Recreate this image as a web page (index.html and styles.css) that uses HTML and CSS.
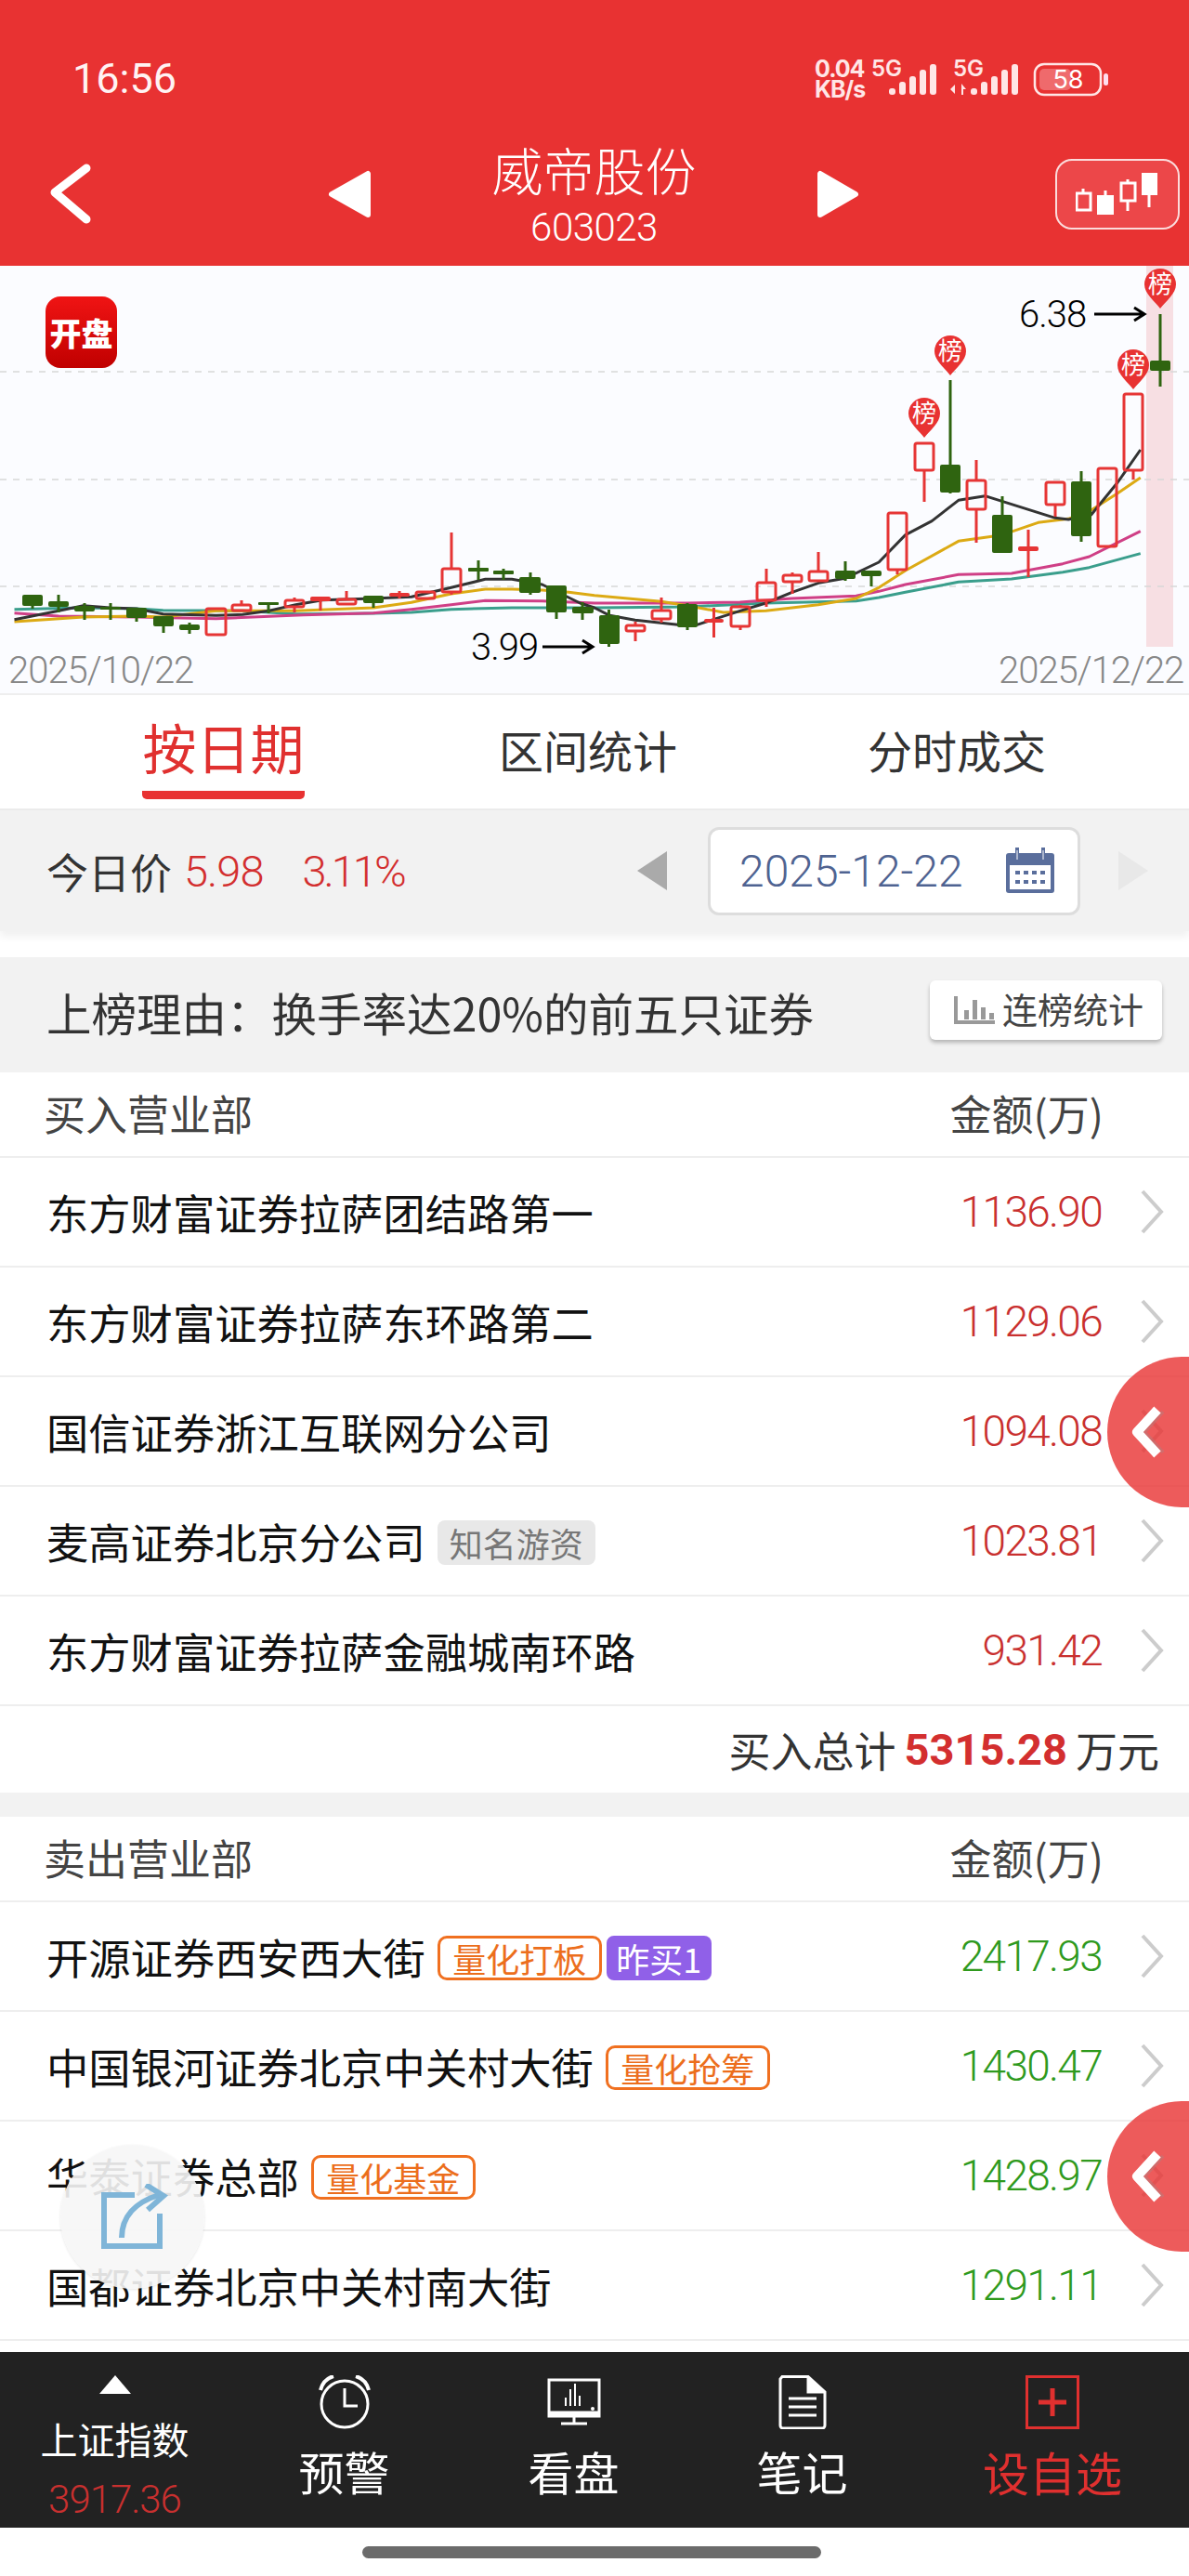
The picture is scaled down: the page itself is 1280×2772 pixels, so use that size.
FILE: index.html
```html
<!DOCTYPE html>
<html lang="zh-CN">
<head>
<meta charset="utf-8">
<title>威帝股份</title>
<link rel="stylesheet" href="styles.css">
</head>
<body>
<div class="page">
  <header class="top">
    <div class="status">
      <span class="clock">16:56</span>
      <div class="status-right">
        <div class="speed"><span>0.04</span><span>KB/s</span></div>
        <svg class="sig" width="320" height="50" viewBox="936 60 320 50">
          <text class="sig-t" x="938" y="82">5G</text>
          <g class="sig-b">
            <rect x="957" y="95" width="7" height="7" rx="3"/><rect x="968" y="88" width="7" height="14" rx="3"/><rect x="979" y="82" width="7" height="20" rx="3"/><rect x="990" y="75" width="7" height="27" rx="3"/><rect x="1001" y="69" width="7" height="33" rx="3"/>
            <path d="M1023 96l5-5v10zM1035 90l5 6h-3v6h-2z"/>
            <rect x="1045" y="95" width="7" height="7" rx="3"/><rect x="1056" y="88" width="7" height="14" rx="3"/><rect x="1067" y="82" width="7" height="20" rx="3"/><rect x="1078" y="75" width="7" height="27" rx="3"/><rect x="1089" y="69" width="7" height="33" rx="3"/>
          </g>
          <text class="sig-t" x="1026" y="82">5G</text>
          <rect class="bat" x="1114" y="69" width="71" height="33" rx="10"/>
          <rect class="bat-f" x="1119" y="74" width="34" height="23" rx="5"/>
          <text class="bat-t" x="1150" y="95">58</text>
          <rect x="1188" y="79" width="5" height="13" rx="2.5" fill="#fde"/>
        </svg>
      </div>
    </div>
    <nav class="nav">
      <svg class="back" width="50" height="70" viewBox="0 0 50 70"><path d="M41 7L7 33l34 29"/></svg>
      <svg width="47" height="52" viewBox="0 0 47 52"><path class="tri" d="M43 4v44L4 26z"/></svg>
      <div class="title"><div class="title-n">威帝股份</div><div class="title-c">603023</div></div>
      <svg width="46" height="52" viewBox="0 0 46 52"><path class="tri" d="M4 4v44l38-22z"/></svg>
      <div class="kline-btn">
        <svg width="90" height="48" viewBox="1159 184 90 48">
          <path class="kl-s" d="M1167 203v5M1191 205v5M1215 193v4M1215 216v11M1238 210v13"/>
          <rect class="kl-h" x="1160" y="208" width="15" height="18"/>
          <rect class="kl-f" x="1182" y="210" width="18" height="21"/>
          <rect class="kl-h" x="1208" y="197" width="15" height="19"/>
          <rect class="kl-f" x="1230" y="186" width="17" height="24"/>
        </svg>
      </div>
    </nav>
  </header>

  <section class="chart">
    <svg class="chart-svg" width="1280" height="460" viewBox="0 287 1280 460">
      <rect class="band" x="1234" y="287" width="29" height="410"/>
      <path class="grid" d="M0 401H1280M0 517H1280M0 632H1280"/>
      <g transform="translate(0 280) scale(.40816 .33333)">
        <polyline class="ma teal" points="38,1130 220,1125 360,1128 430,1133 640,1135 780,1145 985,1143 1085,1140 1190,1130 1350,1125 1568,1125 1813,1122 2020,1110 2258,1103 2318,1092 2388,1075 2528,1042 2668,1032 2803,1010 2873,995 3008,950"/>
        <polyline class="ma pink" points="38,1142 155,1152 360,1155 570,1160 800,1148 985,1142 1085,1130 1190,1115 1280,1102 1430,1103 1568,1110 1813,1110 1952,1107 2088,1095 2258,1087 2318,1072 2388,1050 2528,1018 2668,1014 2803,983 2873,960 3008,878"/>
        <polyline class="ma gold" points="38,1170 220,1155 360,1152 430,1155 570,1135 700,1135 780,1135 985,1125 1085,1108 1190,1080 1280,1065 1350,1065 1430,1068 1500,1075 1568,1085 1744,1105 1813,1118 1908,1140 2020,1135 2158,1115 2258,1095 2318,1060 2388,1005 2528,910 2643,890 2738,850 2818,838 2878,810 2948,755 3008,705"/>
        <polyline class="ma black" points="38,1163 155,1135 220,1118 290,1125 360,1128 430,1145 570,1150 640,1147 710,1135 780,1115 850,1100 985,1095 1085,1090 1190,1060 1280,1033 1350,1033 1430,1050 1530,1110 1568,1125 1608,1150 1675,1165 1788,1180 1838,1180 1952,1135 2020,1110 2089,1075 2159,1045 2229,1030 2318,978 2388,890 2458,845 2528,778 2598,764 2783,835 2818,840 2878,825 2948,720 3008,615"/>
      </g>
      <path class="w-g" d="M35 653V656M63 641V660M91 650V668M119 650V668M147 666V670M176 675V682M204 671V683M289 652V661M402 650V655M515 604V625M542 613V625M571 617V641M599 660V667M627 649V668M655.5 657V697M740 650V679M910 605V626M938 621V632M1023 410V532M1079 535V555M1164 508V584M1249 339V417"/>
      <g class="c-g">
        <rect x="24" y="641" width="22" height="12" rx="2"/><rect x="52" y="648" width="22" height="6" rx="2"/><rect x="80" y="653" width="22" height="6" rx="2"/><rect x="108" y="654" width="22" height="3" rx="1"/><rect x="136" y="655" width="22" height="11" rx="2"/><rect x="165" y="664" width="22" height="11" rx="2"/><rect x="193" y="673" width="22" height="6" rx="2"/><rect x="278" y="649" width="22" height="3" rx="1"/><rect x="391" y="642" width="22" height="8" rx="2"/><rect x="504" y="612" width="22" height="4" rx="1"/><rect x="531" y="615" width="22" height="4" rx="1"/><rect x="559" y="622" width="23" height="17" rx="2"/><rect x="588" y="631" width="22" height="29" rx="2"/><rect x="616" y="654" width="23" height="7" rx="2"/><rect x="645" y="663" width="22" height="31" rx="2"/><rect x="729" y="651" width="22" height="25" rx="2"/><rect x="899" y="615" width="22" height="9" rx="2"/><rect x="927" y="615" width="22" height="6" rx="2"/><rect x="1012" y="501" width="22" height="30" rx="2"/><rect x="1068" y="555" width="22" height="41" rx="2"/><rect x="1153" y="519" width="22" height="59" rx="2"/><rect x="1238" y="389" width="22" height="11" rx="2"/>
      </g>
      <path class="w-r" d="M260 647V652M317 644V647M317 654V660M345 648V658M373 637V646M430 637V645M486 574V613M486 638V641M684 670V674M684 680V691M712 644V658M712 667V671M768.5 655V687M797 652V654M797 675V679M825 613V628M825 647V654M853 617V620M853 627V640M881 595V616M966 614V619M995 507V541M1051 496V518M1051 549V585M1107 571V622M1136 544V557M1220 507V517"/>
      <g class="c-r">
        <rect x="222" y="656" width="21" height="28" rx="2"/><rect x="250" y="652" width="20" height="6" rx="2"/><rect x="307" y="647" width="20" height="7" rx="2"/><rect x="363" y="646" width="20" height="5" rx="2"/><rect x="448" y="638" width="20" height="7" rx="2"/><rect x="476" y="613" width="20" height="25" rx="2"/><rect x="674" y="674" width="20" height="6" rx="2"/><rect x="702" y="658" width="20" height="9" rx="2"/><rect x="787" y="654" width="20" height="21" rx="2"/><rect x="815" y="628" width="20" height="19" rx="2"/><rect x="843" y="620" width="20" height="7" rx="2"/><rect x="871" y="616" width="20" height="10" rx="2"/><rect x="956" y="553" width="20" height="61" rx="2"/><rect x="985" y="478" width="20" height="29" rx="2"/><rect x="1041" y="518" width="20" height="31" rx="2"/><rect x="1126" y="520" width="20" height="24" rx="2"/><rect x="1182" y="505" width="20" height="84" rx="2"/><rect x="1210" y="425" width="20" height="82" rx="2"/>
      </g>
      <g class="c-rf">
        <rect x="334" y="643" width="22" height="5" rx="2"/><rect x="419" y="639" width="22" height="4" rx="2"/><rect x="758" y="667" width="21" height="4" rx="2"/><rect x="1096" y="589" width="22" height="5" rx="2"/>
      </g>
      <g class="pin" transform="translate(995 446)"><path d="M-17 0a17 17 0 1 1 34 0c0 10-11 18-17 26c-6-8-17-16-17-26z"/><text y="9">榜</text></g>
      <g class="pin" transform="translate(1023 379)"><path d="M-17 0a17 17 0 1 1 34 0c0 10-11 18-17 26c-6-8-17-16-17-26z"/><text y="9">榜</text></g>
      <g class="pin" transform="translate(1220 394)"><path d="M-17 0a17 17 0 1 1 34 0c0 10-11 18-17 26c-6-8-17-16-17-26z"/><text y="9">榜</text></g>
      <g class="pin" transform="translate(1249 307)"><path d="M-17 0a17 17 0 1 1 34 0c0 10-11 18-17 26c-6-8-17-16-17-26z"/><text y="9">榜</text></g>
      <text class="mark" x="507" y="711">3.99</text>
      <path class="arrow" d="M584 697H637M627 690l11 7-11 7"/>
      <text class="mark" x="1097" y="353">6.38</text>
      <path class="arrow" d="M1178 339H1231M1221 332l11 7-11 7"/>
      <text class="axis" x="9" y="736">2025/10/22</text>
      <text class="axis" x="1075" y="736">2025/12/22</text>
    </svg>
    <div class="open-badge">开盘</div>
  </section>

  <div class="tabs">
    <div class="tab tab-on">按日期</div>
    <div class="tab tab-2">区间统计</div>
    <div class="tab tab-3">分时成交</div>
  </div>

  <div class="price-bar">
    <span class="pb-l">今日价</span><span class="pb-v">5.98</span><span class="pb-p">3.11%</span>
    <svg class="pb-prev" width="34" height="44" viewBox="0 0 34 44"><path d="M33 1v42L1 22z"/></svg>
    <div class="date-box">
      <span class="date-t">2025-12-22</span>
      <svg width="54" height="50" viewBox="0 0 54 50">
        <rect x="1" y="6" width="52" height="43" rx="3" fill="#5a6e9c"/>
        <rect x="5" y="19" width="44" height="26" fill="#fff"/>
        <path d="M13 0v12M41 0v12" stroke="#5a6e9c" stroke-width="4" fill="none"/>
        <path d="M13 3v10M41 3v10" stroke="#fff" stroke-width="1" fill="none"/>
        <path d="M11 25h5v4h-5zM20 25h5v4h-5zM29 25h5v4h-5zM38 25h5v4h-5zM11 35h5v4h-5zM20 35h5v4h-5zM29 35h5v4h-5zM38 35h5v4h-5z" fill="#5a6e9c"/>
      </svg>
    </div>
    <svg class="pb-next" width="34" height="44" viewBox="0 0 34 44"><path d="M1 1v42l32-21z"/></svg>
  </div>

  <div class="reason">
    <span class="reason-t">上榜理由：换手率达20%的前五只证券</span>
    <div class="stat-btn">
      <svg width="44" height="30" viewBox="0 0 44 30"><path d="M2 0v28h42" fill="none" stroke="#999" stroke-width="4"/><path d="M11 15h5v10h-5zM20 4h5v21h-5zM29 12h5v13h-5zM38 18h5v7h-5z" fill="#999"/></svg>
      <span class="stat-t">连榜统计</span>
    </div>
  </div>

  <main class="list">
    <div class="head"><span>买入营业部</span><span>金额(万)</span></div>
    <div class="row"><span class="name">东方财富证券拉萨团结路第一</span><span class="amt up">1136.90</span><svg class="chev" width="26" height="48" viewBox="0 0 26 48"><path d="M3 2l20 22L3 46"/></svg></div>
    <div class="row"><span class="name">东方财富证券拉萨东环路第二</span><span class="amt up">1129.06</span><svg class="chev" width="26" height="48" viewBox="0 0 26 48"><path d="M3 2l20 22L3 46"/></svg></div>
    <div class="row"><span class="name">国信证券浙江互联网分公司</span><span class="amt up">1094.08</span><svg class="chev" width="26" height="48" viewBox="0 0 26 48"><path d="M3 2l20 22L3 46"/></svg></div>
    <div class="row"><span class="name">麦高证券北京分公司</span><span class="tag tag-g">知名游资</span><span class="amt up">1023.81</span><svg class="chev" width="26" height="48" viewBox="0 0 26 48"><path d="M3 2l20 22L3 46"/></svg></div>
    <div class="row"><span class="name">东方财富证券拉萨金融城南环路</span><span class="amt up">931.42</span><svg class="chev" width="26" height="48" viewBox="0 0 26 48"><path d="M3 2l20 22L3 46"/></svg></div>
    <div class="total"><span>买入总计</span><b>5315.28</b><span>万元</span></div>
    <div class="gap"></div>
    <div class="head"><span>卖出营业部</span><span>金额(万)</span></div>
    <div class="row"><span class="name">开源证券西安西大街</span><span class="tag tag-o">量化打板</span><span class="tag tag-p">昨买1</span><span class="amt dn">2417.93</span><svg class="chev" width="26" height="48" viewBox="0 0 26 48"><path d="M3 2l20 22L3 46"/></svg></div>
    <div class="row"><span class="name">中国银河证券北京中关村大街</span><span class="tag tag-o">量化抢筹</span><span class="amt dn">1430.47</span><svg class="chev" width="26" height="48" viewBox="0 0 26 48"><path d="M3 2l20 22L3 46"/></svg></div>
    <div class="row"><span class="name">华泰证券总部</span><span class="tag tag-o">量化基金</span><span class="amt dn">1428.97</span><svg class="chev" width="26" height="48" viewBox="0 0 26 48"><path d="M3 2l20 22L3 46"/></svg></div>
    <div class="row"><span class="name">国都证券北京中关村南大街</span><span class="amt dn">1291.11</span><svg class="chev" width="26" height="48" viewBox="0 0 26 48"><path d="M3 2l20 22L3 46"/></svg></div>
  </main>

  <footer class="bar">
    <div class="cell idx">
      <svg width="34" height="20" viewBox="0 0 34 20"><path d="M17 0L34 20H0z" fill="#fff"/></svg>
      <span class="idx-n">上证指数</span>
      <span class="idx-v">3917.36</span>
    </div>
    <div class="cell">
      <svg class="cell-i" width="60" height="58" viewBox="0 0 60 58" fill="none" stroke="#fff"><circle cx="30" cy="31" r="25" stroke-width="3"/><path d="M30 14v19h14" stroke-width="3"/><path d="M4 16C6 8 11 3 18 1M56 16C54 8 49 3 42 1" stroke-width="4"/></svg>
      <span class="cell-t">预警</span>
    </div>
    <div class="cell">
      <svg class="cell-i" width="60" height="58" viewBox="0 0 60 58" fill="none" stroke="#fff"><rect x="3" y="5" width="54" height="39" stroke-width="3"/><path d="M3 41h54" stroke-width="5"/><path d="M30 44v7M16 52h28" stroke-width="3"/><path d="M21 33v-9M26 33V15M31 33V9M36 33V22" stroke-width="2"/><circle cx="50" cy="36" r="2" fill="#fff" stroke="none"/></svg>
      <span class="cell-t">看盘</span>
    </div>
    <div class="cell">
      <svg class="cell-i" width="52" height="58" viewBox="0 0 52 58" fill="none" stroke="#fff" stroke-width="3"><path d="M4 1.500h28L50 18v36a3 3 0 0 1-3 3H5a3 3 0 0 1-3-3V4z"/><path d="M32 2v16h18" fill="#fff"/><path d="M11 25h30M11 34h30M11 43h30"/></svg>
      <span class="cell-t">笔记</span>
    </div>
    <div class="cell">
      <svg class="cell-i" width="58" height="58" viewBox="0 0 58 58" fill="none" stroke="#e0302f"><rect x="1.500" y="1.500" width="55" height="55" stroke-width="3"/><path d="M29 14v30M14 29h30" stroke-width="5"/></svg>
      <span class="cell-t add">设自选</span>
    </div>
  </footer>
  <div class="home"><i></i></div>

  <div class="side side-1"><svg width="44" height="56" viewBox="0 0 44 56"><path class="side-b" d="M38 6L18 28l20 22"/><path class="side-w" d="M32 4L10 28l22 24"/></svg></div>
  <div class="side side-2"><svg width="44" height="56" viewBox="0 0 44 56"><path class="side-b" d="M38 6L18 28l20 22"/><path class="side-w" d="M32 4L10 28l22 24"/></svg></div>
  <div class="share">
    <svg width="74" height="72" viewBox="0 0 74 72" fill="none" stroke="#7fb5d8" stroke-width="6"><path d="M38 12H5v55h60V32"/><path d="M24 58c0-22 14-38 40-46"/><path d="M50 1l19 12-17 15" stroke-width="6"/></svg>
  </div>
</div>
</body>
</html>
```

FILE: styles.css
```css
* { box-sizing: border-box; }
html, body { margin: 0; padding: 0; background: #fff; }
body { font-family: "Noto Sans CJK SC", Roboto, sans-serif; font-weight: 400; color: #333; }
.page { position: relative; width: 1280px; height: 2772px; overflow: hidden; display: flex; flex-direction: column; }

/* header */
.top { background: #e83232; height: 286px; flex: none; color: #fff; }
.status { height: 150px; display: flex; align-items: flex-start; padding: 61px 0 0 78px; }
.clock { font: 400 45px/48px Roboto, sans-serif; color: #fff3f3; }
.status-right { margin-left: auto; margin-top: -1px; display: flex; align-items: flex-start; padding-right: 24px; }
.speed { display: flex; flex-direction: column; font: 700 25px/22px Inter, sans-serif; color: #ffe6e6; letter-spacing: -1px; padding-top: 3px; width: 59px; }
.sig { display: block; }
.sig-t { font: 600 24px Inter, sans-serif; fill: #ffe6e6; }
.sig-b { fill: #ffe6e6; }
.bat { fill: none; stroke: #ffe6e6; stroke-width: 2.500px; }
.bat-f { fill: #ef6a6c; }
.bat-t { font: 400 27px Inter, sans-serif; fill: #fff; text-anchor: middle; }
.nav { display: grid; grid-template-columns: 353px 47px 479px 46px 1fr; align-items: center; height: 136px; }
.back { margin-left: 52px; margin-top: -18px; }
.back path { fill: none; stroke: #fff; stroke-width: 9; stroke-linecap: round; stroke-linejoin: round; }
.tri { fill: #fff; stroke: #fff; stroke-width: 6; stroke-linejoin: round; }
.nav svg:nth-child(2), .nav svg:nth-child(4) { margin-top: -18px; }
.title { text-align: center; margin-top: -19px; }
.title-n { font-size: 55px; line-height: 66px; font-weight: 300; color: #fff; }
.title-c { font: 300 42px/48px Roboto, sans-serif; letter-spacing: -.5px; margin-top: 7px; color: #fff; }
.kline-btn { justify-self: end; margin-right: 10px; margin-top: -18px; width: 134px; height: 76px; background: #ec4749; border: 2px solid #fbdcdc; border-radius: 18px; display: flex; align-items: flex-end; justify-content: center; padding-bottom: 13px; }
.kl-s { stroke: #fff; stroke-width: 3; fill: none; }
.kl-h { fill: none; stroke: #fff; stroke-width: 3; }
.kl-f { fill: #fff; }

/* chart */
.chart { position: relative; flex: none; height: 462px; background: #fbfcff; border-bottom: 2px solid #eee; }
.chart-svg { display: block; }
.band { fill: #f7dfe3; }
.grid { stroke: #d8d8d8; stroke-width: 1.500; stroke-dasharray: 7 7; fill: none; }
.ma { fill: none; stroke-width: 3; vector-effect: non-scaling-stroke; stroke-linejoin: round; }
.teal { stroke: #3a9e8c; }
.pink { stroke: #cf3f86; }
.gold { stroke: #dcaa14; }
.black { stroke: #333; }
.w-g { stroke: #2f6410; stroke-width: 3; fill: none; }
.c-g { fill: #2f6410; }
.w-r { stroke: #e63535; stroke-width: 3; fill: none; }
.c-r { fill: none; stroke: #e63535; stroke-width: 3; }
.c-rf { fill: #e63535; }
.pin path { fill: #e83232; }
.pin text { font-size: 26px; font-weight: 400; fill: #fff; text-anchor: middle; }
.mark { font: 300 40px Roboto, sans-serif; letter-spacing: -1px; fill: #000; }
.arrow { fill: none; stroke: #000; stroke-width: 3; }
.axis { font: 300 40px Roboto, sans-serif; letter-spacing: -1px; fill: #888; }
.open-badge { position: absolute; left: 49px; top: 33px; width: 77px; height: 77px; border-radius: 16px; background: linear-gradient(#f01414, #c00000); color: #fff; font-size: 34px; font-weight: 900; line-height: 77px; text-align: center; }

/* tabs */
.tabs { position: relative; flex: none; height: 122px; background: #fff; display: flex; }
.tab { font-size: 48px; line-height: 60px; color: #333; padding-top: 28px; }
.tab-on { margin-left: 153px; width: 175px; height: 112px; text-align: center; font-size: 58px; color: #e0302f; border-bottom: 9px solid #e83232; border-radius: 0 0 5px 5px; padding-top: 20px; line-height: 70px; white-space: nowrap; }
.tab-2 { margin-left: 209px; }
.tab-3 { margin-left: 205px; }

/* price bar */
.price-bar { position: relative; flex: none; height: 132px; background: #f2f2f2; border-top: 2px solid #ebebeb; box-shadow: 0 6px 8px rgba(0,0,0,.06); display: flex; align-items: center; padding: 0 43px 0 50px; }
.pb-l { font-size: 45px; color: #333; }
.pb-v, .pb-p { font: 300 47px Roboto, sans-serif; color: #d32f2f; }
.pb-v { margin-left: 13px; letter-spacing: -1px; }
.pb-p { margin-left: 42px; letter-spacing: -3px; }
.pb-prev { margin-left: auto; }
.pb-prev path { fill: #aaa; }
.pb-next path { fill: #e8e8e8; }
.date-box { width: 401px; height: 95px; margin: 0 40px 0 43px; background: #fff; border: 3px solid #ddd; border-radius: 12px; display: flex; align-items: center; justify-content: space-between; padding: 0 24px 0 31px; }
.date-t { font: 300 48px Roboto, sans-serif; color: #4f6391; }

/* reason */
.reason { flex: none; margin-top: 28px; height: 124px; background: #f2f2f2; display: flex; align-items: center; padding: 0 29px 0 50px; justify-content: space-between; }
.reason-t { font-size: 48.500px; line-height: 60px; margin-top: -6px; color: #333; }
.stat-btn { width: 250px; height: 64px; margin-top: -10px; background: #fff; border-radius: 6px; box-shadow: 0 3px 4px rgba(0,0,0,.25); display: flex; align-items: center; gap: 8px; padding-left: 26px; font-size: 38px; color: #444; }
.stat-t { margin-top: -6px; }

/* list */
.list { flex: none; height: 1377px; overflow: hidden; background: #fff; }
.head { height: 92px; display: flex; justify-content: space-between; align-items: center; padding: 0 92px 4px 47px; font-size: 45px; color: #444; border-bottom: 2px solid #eee; }
.row { height: 118px; display: flex; align-items: center; padding: 0 27px 0 50px; border-bottom: 2px solid #eee; }
.name { font-size: 45.300px; color: #111; }
.amt { margin-left: auto; margin-right: 41px; font: 300 46px Roboto, sans-serif; letter-spacing: -1.700px; }
.up { color: #c9302f; }
.dn { color: #2f9a1e; }
.chev { flex: none; }
.chev path { fill: none; stroke: #ccc; stroke-width: 4; }
.tag { height: 48px; display: inline-flex; align-items: center; justify-content: center; border-radius: 8px; font-size: 36px; margin-top: 4px; }
.tag-g { width: 170px; margin-left: 13px; background: #e8e8e8; color: #777; }
.tag-o { width: 177px; margin-left: 13px; border: 3px solid #f07020; color: #ec6e1c; border-radius: 10px; }
.tag-p { width: 113px; margin-left: 5px; background: #9060e8; color: #fff; }
.total { height: 93px; display: flex; align-items: center; justify-content: flex-end; padding-right: 32px; font-size: 45px; color: #333; }
.total b { font: 700 47px Roboto, sans-serif; color: #d32f2f; margin: 0 9px; }
.gap { height: 26px; background: #f2f2f2; }

/* bottom bar */
.bar { flex: none; height: 189px; background: #222; display: grid; grid-template-columns: 247px 247px 247px 245px 294px; }
.cell { display: flex; flex-direction: column; align-items: center; padding-top: 25px; }
.cell-i { display: block; }
.cell-t { font-size: 49px; line-height: 66px; color: #fff; margin-top: 12px; }
.cell-t.add { color: #e0302f; font-size: 50px; }
.idx-n { font-size: 40px; line-height: 52px; color: #fff; margin-top: 22px; }
.idx-v { font: 300 42px/44px Roboto, sans-serif; letter-spacing: -1px; color: #c8302f; margin-top: 18px; }
.home { flex: none; height: 52px; display: flex; justify-content: center; background: #fff; padding: 20px 7px 0 0; }
.home i { display: block; width: 494px; height: 13px; background: #6b6b6b; border-radius: 7px; }

/* floats */
.side { position: absolute; left: 1192px; width: 176px; height: 162px; border-radius: 81px; background: rgba(232,50,50,.8); padding: 53px 0 0 22px; }
.side-1 { top: 1460px; }
.side-2 { top: 2261px; }
.side svg { display: block; }
.side-b { fill: none; stroke: rgba(190,120,120,.6); stroke-width: 4; }
.side-w { fill: none; stroke: #fff; stroke-width: 10; stroke-linejoin: round; }
.share { position: absolute; left: 65px; top: 2308px; width: 155px; height: 155px; border-radius: 50%; background: rgba(246,246,246,.9); box-shadow: 0 1px 3px rgba(0,0,0,.1); display: flex; align-items: center; justify-content: center; padding: 0 0 0 3px; }
```
